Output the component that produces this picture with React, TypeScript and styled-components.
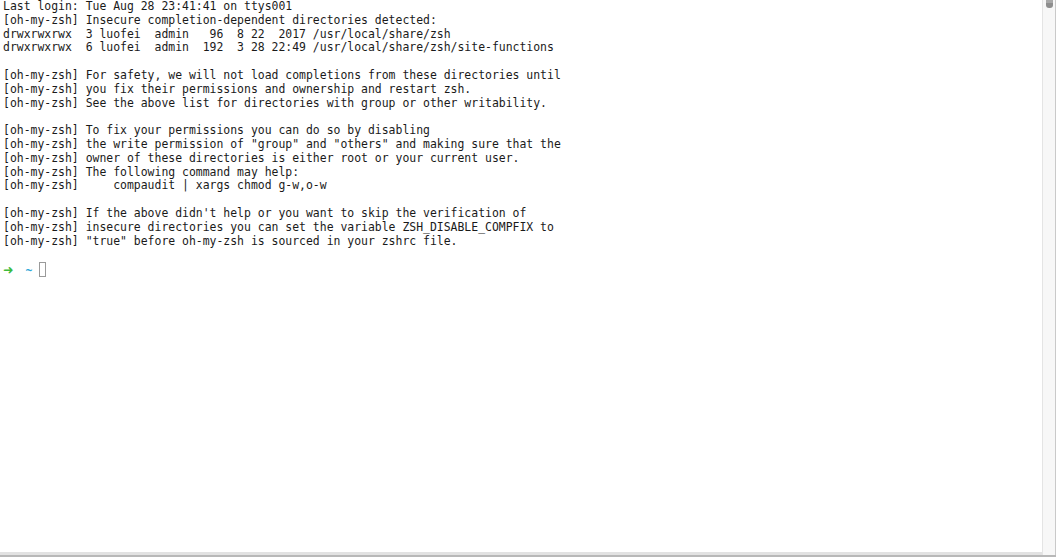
import React from "react";
import styled, { createGlobalStyle } from "styled-components";

const Global = createGlobalStyle`
  html, body { margin: 0; padding: 0; background: #ffffff; }
  #root { width: 1056px; height: 557px; }
`;

const Window = styled.div`
  width: 1056px;
  height: 557px;
  box-sizing: border-box;
  display: flex;
  flex-direction: row;
  background: #ffffff;
  border-bottom: 2px solid #b8b8b8;
  box-shadow: inset 0 -3px 0 #e2e2e2;
  overflow: hidden;
`;

const Screen = styled.div`
  flex: 1;
  padding: 0 0 0 3px;
  font-family: "DejaVu Sans Mono", "Liberation Mono", monospace;
  font-size: 11.45px;
  line-height: 13.8px;
  color: #1a1a1a;
  white-space: pre;
`;

const Line = styled.div`
  height: 13.8px;
`;

const Arrow = styled.span`
  display: inline-block;
  width: 1ch;
  overflow: visible;
  color: #3dbb3d;
  font-family: "DejaVu Sans", sans-serif;
  font-size: 12.5px;
  font-weight: bold;
`;

const Tilde = styled.span`
  color: #2fa8d8;
  font-weight: bold;
`;

const Cursor = styled.span`
  display: inline-block;
  width: 5px;
  height: 13px;
  border: 1px solid #9a9a9a;
  vertical-align: -3px;
`;

const Scrollbar = styled.div`
  width: 12px;
  flex: none;
  background: #f7f7f7;
  border-left: 1px solid #e4e4e4;
  border-right: 1px solid #c9c9c9;
  display: flex;
  flex-direction: column;
  align-items: center;
`;

const Thumb = styled.div`
  width: 7px;
  height: 8px;
  border-radius: 0 0 3px 3px;
  background: #8e8e8e;
  box-shadow: inset 0 3px 0 #a8a8a8;
`;

const lines = [
  "Last login: Tue Aug 28 23:41:41 on ttys001",
  "[oh-my-zsh] Insecure completion-dependent directories detected:",
  "drwxrwxrwx  3 luofei  admin   96  8 22  2017 /usr/local/share/zsh",
  "drwxrwxrwx  6 luofei  admin  192  3 28 22:49 /usr/local/share/zsh/site-functions",
  "",
  "[oh-my-zsh] For safety, we will not load completions from these directories until",
  "[oh-my-zsh] you fix their permissions and ownership and restart zsh.",
  "[oh-my-zsh] See the above list for directories with group or other writability.",
  "",
  "[oh-my-zsh] To fix your permissions you can do so by disabling",
  '[oh-my-zsh] the write permission of "group" and "others" and making sure that the',
  "[oh-my-zsh] owner of these directories is either root or your current user.",
  "[oh-my-zsh] The following command may help:",
  "[oh-my-zsh]     compaudit | xargs chmod g-w,o-w",
  "",
  "[oh-my-zsh] If the above didn't help or you want to skip the verification of",
  "[oh-my-zsh] insecure directories you can set the variable ZSH_DISABLE_COMPFIX to",
  '[oh-my-zsh] "true" before oh-my-zsh is sourced in your zshrc file.',
  "",
];

export default function App() {
  return (
    <>
      <Global />
      <Window>
        <Screen>
          {lines.map((l, i) => (
            <Line key={i}>{l}</Line>
          ))}
          <Line>
            <Arrow>➜</Arrow>
            {"  "}
            <Tilde>~</Tilde>
            {" "}
            <Cursor />
          </Line>
        </Screen>
        <Scrollbar>
          <Thumb />
        </Scrollbar>
      </Window>
    </>
  );
}
